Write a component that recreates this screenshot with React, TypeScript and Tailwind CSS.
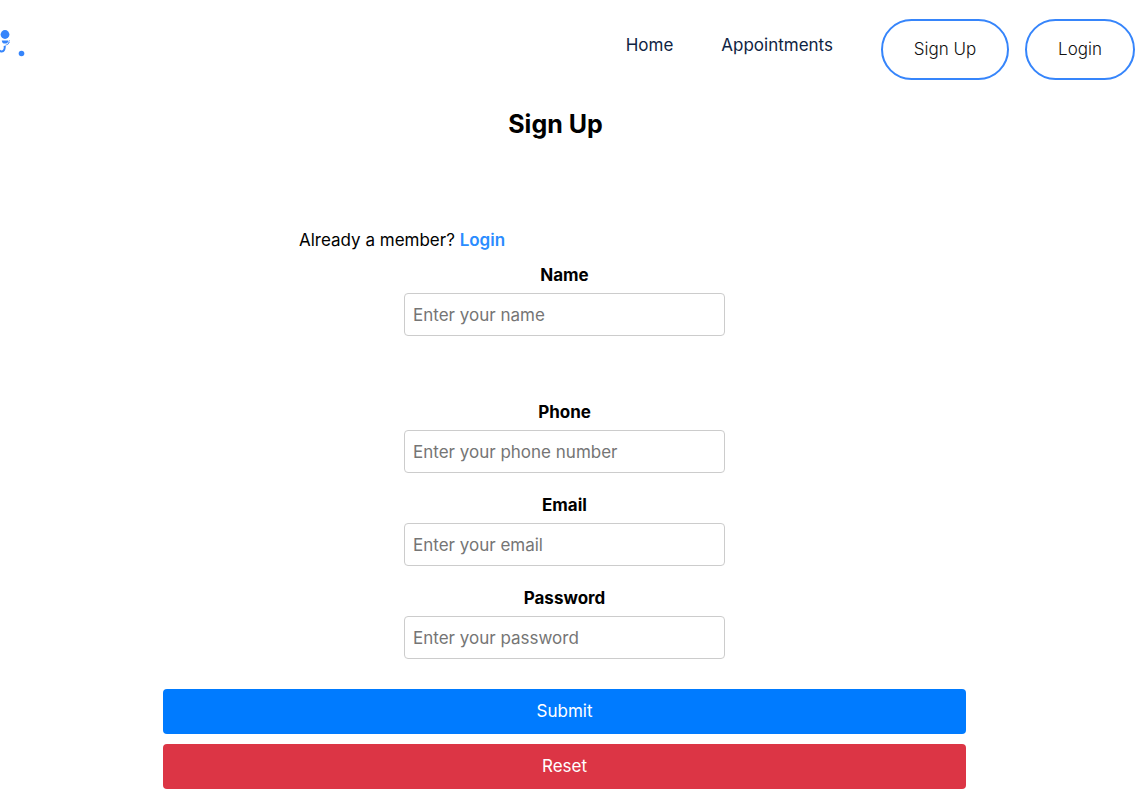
import React from "react";

type FieldProps = {
  id: string;
  label: string;
  type: string;
  placeholder: string;
};

function Field({ id, label, type, placeholder }: FieldProps) {
  return (
    <div className="flex w-[321px] flex-col gap-1.5">
      <label htmlFor={id} className="text-center leading-6 font-bold">
        {label}
      </label>
      <input
        id={id}
        name={id}
        type={type}
        placeholder={placeholder}
        className="h-[43px] w-full rounded border border-[#ccc] px-2 placeholder:text-[#757575]"
      />
    </div>
  );
}

function Logo() {
  return (
    <svg viewBox="0 0 28 32" className="h-8 w-7" fill="#3685fb" aria-hidden="true">
      <circle cx="5" cy="6.5" r="4.4" />
      <path d="M1.8 12.4H8.4C8 14.6 6.9 15.6 5 15.6S2 14.6 1.8 12.4Z" />
      <path
        d="M9.6 12.3C8.6 13.3 9 14.1 8.6 15.2C8.1 16.3 6.8 16.7 5.6 17.1M7.6 16.6C8 15.7 9 15.4 9.4 14.2"
        fill="none"
        stroke="#3685fb"
        strokeWidth="0.8"
      />
      <path d="M5.8 17.6C5.8 21.5 4.8 24.6 1.8 24.6C.9 24.6.4 24.3 0 23.9V21.7C1 22.6 2.2 22.8 3 21.8C3.8 20.8 3.9 19 3.6 18Z" />
      <circle cx="21.5" cy="25.5" r="2.8" />
    </svg>
  );
}

export default function App() {
  return (
    <div className="min-h-screen overflow-x-hidden bg-white pb-1 font-['Inter','Liberation_Sans',sans-serif] text-[17px] text-black">
      <header className="flex items-start justify-between pt-[19px] pr-[7px]">
        <a href="#home" aria-label="Home page" className="pt-[9px]">
          <Logo />
        </a>
        <div className="flex items-center gap-12">
          <nav className="flex gap-12 pb-2.5 leading-6 text-[#0f2443]">
            <a href="#home">Home</a>
            <a href="#appointments">Appointments</a>
          </nav>
          <div className="flex gap-4">
            <button type="button" className="h-[61px] w-32 rounded-full border-2 border-[#3685fb] font-light text-[#111]">
              Sign Up
            </button>
            <button type="button" className="h-[61px] w-[110px] rounded-full border-2 border-[#3685fb] font-light text-[#111]">
              Login
            </button>
          </div>
        </div>
      </header>

      <main className="flex flex-col items-center pr-[13px]">
        <h1 className="mt-6 pr-[18px] text-[25px] leading-10 font-bold">Sign Up</h1>
        <p className="mt-[84px] w-[531px] leading-6">
          Already a member?{" "}
          <a href="#login" className="font-semibold text-[#2a8cff]">
            Login
          </a>
        </p>
        <form className="mt-[11px] flex w-full max-w-[803px] flex-col items-center gap-5">
          <div className="pb-11">
            <Field id="name" label="Name" type="text" placeholder="Enter your name" />
          </div>
          <Field id="phone" label="Phone" type="tel" placeholder="Enter your phone number" />
          <Field id="email" label="Email" type="email" placeholder="Enter your email" />
          <Field id="password" label="Password" type="password" placeholder="Enter your password" />
          <div className="flex w-full flex-col gap-2.5 pt-2.5">
            <button type="submit" className="h-[45px] w-full rounded bg-[#007bff] text-white">
              Submit
            </button>
            <button type="reset" className="h-[45px] w-full rounded bg-[#dc3545] text-white">
              Reset
            </button>
          </div>
        </form>
      </main>
    </div>
  );
}
